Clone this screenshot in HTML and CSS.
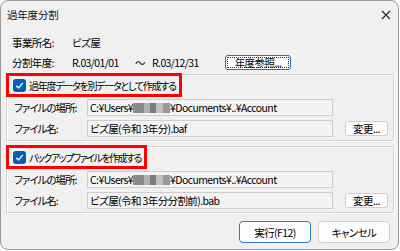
FILE: index.html
```html
<!DOCTYPE html>
<html lang="ja">
<head>
<meta charset="utf-8">
<link rel="stylesheet" href="styles.css">
</head>
<body>
<div class="window">
  <div class="titlebar">
    <span class="title">過年度分割</span>
    <svg class="close" width="10" height="10" viewBox="0 0 10 10"><path d="M1 1L9 9M9 1L1 9" stroke="#222" stroke-width="1.1" fill="none"/></svg>
  </div>
  <div class="info">
    <div class="inforow"><span class="ilabel">事業所名:</span><span>ビズ屋</span></div>
    <div class="inforow"><span class="ilabel">分割年度:</span><span class="date">R.03/01/01</span><span class="tilde">～</span><span class="date2">R.03/12/31</span><button class="btn focus small"><span class="dotted">年度参照...</span></button></div>
  </div>
  <div class="group">
    <div class="check"><span class="cb"><svg width="9" height="9" viewBox="0 0 9 9"><path d="M1.3 4.8L3.5 7L7.8 1.8" stroke="#fff" stroke-width="1.3" fill="none"/></svg></span>過年度データを別データとして作成する</div>
    <div class="frow"><span class="flabel">ファイルの場所:</span><span class="field">C:¥Users¥<span class="blur"></span>¥Documents¥..¥Account</span></div>
    <div class="frow gap"><span class="flabel">ファイル名:</span><span class="field">ビズ屋(令和 3年分).baf</span><button class="btn change">変更...</button></div>
  </div>
  <div class="group g2">
    <div class="check"><span class="cb"><svg width="9" height="9" viewBox="0 0 9 9"><path d="M1.3 4.8L3.5 7L7.8 1.8" stroke="#fff" stroke-width="1.3" fill="none"/></svg></span>バックアップファイルを作成する</div>
    <div class="frow"><span class="flabel">ファイルの場所:</span><span class="field">C:¥Users¥<span class="blur"></span>¥Documents¥..¥Account</span></div>
    <div class="frow gap"><span class="flabel">ファイル名:</span><span class="field">ビズ屋(令和 3年分分割前).bab</span><button class="btn change">変更...</button></div>
  </div>
  <div class="actions">
    <button class="btn act primary">実行(F12)</button>
    <button class="btn act">キャンセル</button>
  </div>
</div>
</body>
</html>
```
FILE: styles.css
```css
* { box-sizing: border-box; }
html, body { margin: 0; padding: 0; background: #fff; }
body {
  font-family: "Noto Sans CJK JP", "Noto Sans", sans-serif;
  font-size: 10.5px;
  font-feature-settings: "palt";
  letter-spacing: -0.6px;
  color: #000;
}
.window {
  width: 399px;
  height: 250px;
  border: 1px solid #9a9a9a;
  border-radius: 8px;
  background: #f0f0f0;
  overflow: hidden;
}
.titlebar {
  height: 27px;
  display: flex;
  align-items: center;
  justify-content: space-between;
  padding: 0 7px 0 6px;
}
.title { font-size: 10.5px; color: #111; letter-spacing: -0.2px; }
.info { padding-left: 11px; padding-top: 4px; }
.inforow { height: 20px; display: flex; align-items: center; white-space: nowrap; }
.inforow > * { flex: none; }
.ilabel { width: 60px; }
.date { width: 63px; }
.tilde { width: 17px; }
.date2 { width: 73px; }
button { font-family: inherit; font-size: inherit; font-feature-settings: "palt"; letter-spacing: inherit; color: #000; padding: 0; }
.btn {
  background: #fdfdfd;
  border: 1px solid #cfcfcf;
  border-radius: 3px;
  display: flex;
  align-items: center;
  justify-content: center;
  white-space: nowrap;
  flex: none;
}
.small { width: 66px; height: 15px; }
.focus { border-color: #1a73d0; }
.dotted {
  display: flex; align-items: center; justify-content: center;
  width: 62px; height: 11px;
  border: 1px dotted #333;
}
.group {
  margin: 2px 0 0 5px;
  width: 388px;
  border: 1px solid #d3d3d3;
  box-shadow: inset 1px 1px 0 #fff, 1px 1px 0 #fff;
  padding: 0 0 3px 7px;
}
.g2 { margin-top: 5px; }
.check {
  display: flex;
  align-items: center;
  width: fit-content;
  white-space: nowrap;
  height: 24px;
  margin: -2px 0 0 -8px;
  border: 3px solid #f00;
  padding: 0 3px 0 4px;
  font-size: 10px;
  letter-spacing: -1.25px;
}
.g2 .check { letter-spacing: -1.5px; }
.cb {
  width: 13px; height: 13px;
  background: #005fb8;
  border-radius: 3px;
  display: flex; align-items: center; justify-content: center;
  margin-right: 3px;
  flex: none;
}
.frow { display: flex; align-items: center; height: 17px; margin-top: 2px; white-space: nowrap; }
.frow.gap { margin-top: 4px; }
.flabel { width: 73px; flex: none; letter-spacing: -1px; }
.field {
  width: 246px; height: 17px;
  flex: none;
  background: #f3f3f3;
  border: 1px solid #cdcdcd;
  padding-left: 2px;
  display: flex; align-items: center;
  overflow: hidden;
}
.blur {
  display: inline-block;
  flex: none;
  width: 37px; height: 10px;
  background: linear-gradient(90deg, #8a8a8a 0 30%, #b0b0b0 30% 45%, #7c7c7c 45% 62%, #c0c0c0 62% 80%, #999 80% 100%);
}
.change { width: 43px; height: 15px; margin-left: 12px; }
.actions {
  display: flex;
  justify-content: flex-end;
  gap: 7px;
  padding-right: 8px;
  margin-top: 8px;
}
.act { width: 72px; height: 22px; border-radius: 4px; }
.primary { border-color: #2a7ad0; }
```
